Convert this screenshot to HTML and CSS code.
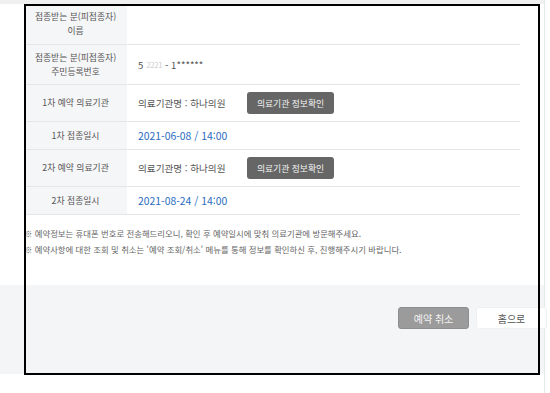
FILE: index.html
```html
<!DOCTYPE html>
<html lang="ko">
<head>
<meta charset="UTF-8">
<meta name="viewport" content="width=device-width, initial-scale=1.0">
<title>예약 확인</title>
<link rel="stylesheet" href="styles.css">
</head>
<body>
<div class="page">
    <div class="top-strip"></div>
    <div class="container">
        <div class="info-table">
            <div class="row row-tall">
                <div class="label">접종받는 분(피접종자)<br>이름</div>
                <div class="value"></div>
            </div>
            <div class="row row-tall2">
                <div class="label">접종받는 분(피접종자)<br>주민등록번호</div>
                <div class="value">5 <span class="mask">2221</span> - 1******</div>
            </div>
            <div class="row row-btn">
                <div class="label">1차 예약 의료기관</div>
                <div class="value">
                    <span class="clinic">의료기관명 : 하나의원</span>
                    <button type="button" class="btn-info">의료기관 정보확인</button>
                </div>
            </div>
            <div class="row row-date">
                <div class="label">1차 접종일시</div>
                <div class="value date">2021-06-08 / 14:00</div>
            </div>
            <div class="row row-btn">
                <div class="label">2차 예약 의료기관</div>
                <div class="value">
                    <span class="clinic">의료기관명 : 하나의원</span>
                    <button type="button" class="btn-info">의료기관 정보확인</button>
                </div>
            </div>
            <div class="row row-date">
                <div class="label">2차 접종일시</div>
                <div class="value date">2021-08-24 / 14:00</div>
            </div>
        </div>

        <div class="notes">
            <p>※ 예약정보는 휴대폰 번호로 전송해드리오니, 확인 후 예약일시에 맞춰 의료기관에 방문해주세요.</p>
            <p>※ 예약사항에 대한 조회 및 취소는 '예약 조회/취소' 메뉴를 통해 정보를 확인하신 후, 진행해주시기 바랍니다.</p>
        </div>
    </div>

    <div class="footer">
        <button type="button" class="btn-cancel">예약 취소</button>
        <button type="button" class="btn-home">홈으로</button>
    </div>

    <div class="frame"></div>
</div>
</body>
</html>
```

FILE: styles.css
```css
body {
    margin: 0;
    padding: 0;
    font-family: "Noto Sans CJK KR", "Noto Sans", sans-serif;
    color: #555;
    background-color: #fff;
}

.page {
    position: relative;
    width: 544px;
    height: 393px;
    border-right: 1px solid #e8e8e8;
}

.top-strip {
    height: 4px;
    background-color: #f0f0f0;
}

.container {
    padding-left: 24px;
    width: 496px;
}

.info-table {
    display: flex;
    flex-direction: column;
}

.row {
    display: flex;
    border-bottom: 1px solid #e6e6e6;
}

.row-tall {
    height: 40px;
}

.row-tall2 {
    height: 39px;
}

.row-btn {
    height: 36px;
}

.row-date {
    height: 27px;
}

.label {
    width: 103px;
    flex-shrink: 0;
    display: flex;
    align-items: center;
    justify-content: center;
    text-align: center;
    background-color: #f5f6f8;
    font-size: 8.8px;
    line-height: 14px;
    color: #555;
}

.value {
    flex: 1;
    display: flex;
    align-items: center;
    padding-left: 11px;
    font-size: 9.6px;
    color: #555;
}

.mask {
    color: #cfcfcf;
    font-size: 8px;
    letter-spacing: -0.5px;
    margin: 0 3px;
}

.clinic {
    width: 109px;
}

.date {
    font-size: 10.4px;
    color: #2a6cc0;
}

.btn-info {
    font-family: inherit;
    font-size: 8.8px;
    color: #f2f2f2;
    background-color: #666;
    border: none;
    border-radius: 3px;
    width: 87px;
    height: 22px;
    padding: 0;
    cursor: pointer;
}

.notes {
    padding-top: 10px;
}

.notes p {
    margin: 0;
    font-size: 8.4px;
    line-height: 16px;
    color: #666;
    white-space: nowrap;
}

.footer {
    position: absolute;
    left: 0;
    top: 285px;
    width: 544px;
    height: 89px;
    background-color: #f4f5f7;
    display: flex;
    justify-content: flex-end;
    align-items: flex-start;
    gap: 7px;
    padding-top: 22px;
    box-sizing: border-box;
}

.footer button {
    font-family: inherit;
    font-size: 10px;
    width: 71px;
    height: 22px;
    border-radius: 3px;
    padding: 0;
    cursor: pointer;
}

.btn-cancel {
    background-color: #9b9b9b;
    border: 1px solid #8e8e8e;
    color: #f4f4f4;
}

.btn-home {
    background-color: #fff;
    border: 1px solid #f0f0f0;
    color: #555;
    margin-right: -3px;
}

.frame {
    position: absolute;
    left: 24px;
    top: 4px;
    width: 516px;
    height: 371px;
    border: 2px solid #000;
    box-sizing: border-box;
    pointer-events: none;
}
```
